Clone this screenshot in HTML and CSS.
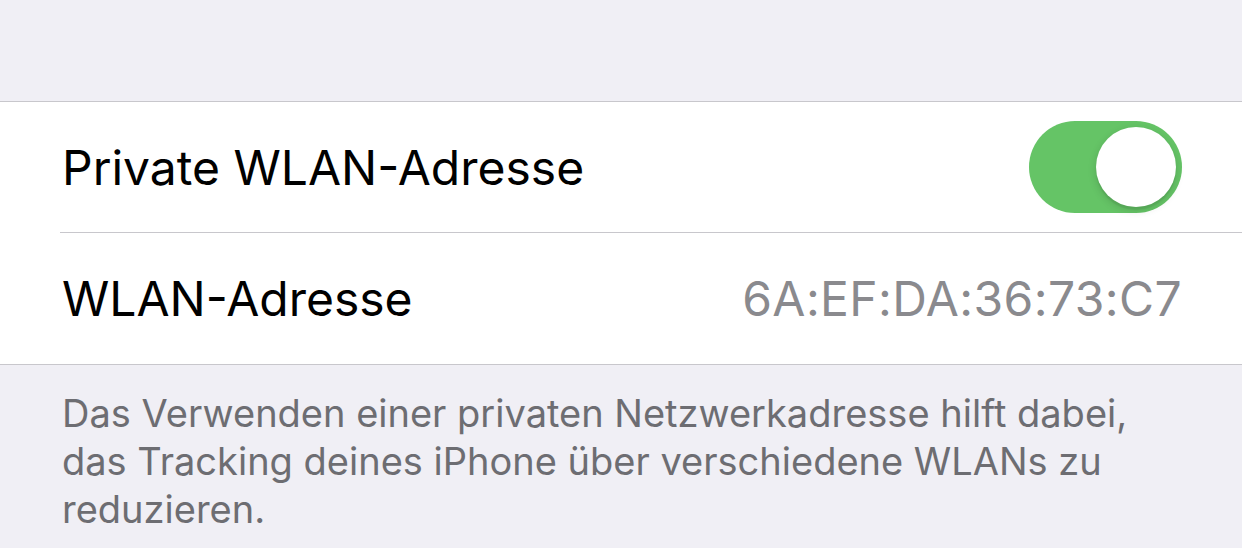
FILE: index.html
```html
<!DOCTYPE html>
<html lang="de">
<head>
    <meta charset="UTF-8">
    <meta name="viewport" content="width=device-width, initial-scale=1.0">
    <title>WLAN-Adresse</title>
    <link rel="stylesheet" href="styles.css">
</head>
<body>
    <div class="top-space"></div>

    <div class="group">
        <div class="row row-first">
            <span class="label">Private WLAN-Adresse</span>
            <div class="switch switch-on">
                <div class="knob"></div>
            </div>
        </div>
        <div class="row row-last">
            <span class="label">WLAN-Adresse</span>
            <span class="value">6A:EF:DA:36:73:C7</span>
        </div>
    </div>

    <p class="footer">Das Verwenden einer privaten Netzwerkadresse hilft dabei, das Tracking deines iPhone über verschiedene WLANs zu reduzieren.</p>
</body>
</html>
```

FILE: styles.css
```css
body {
    margin: 0;
    background: #f0eff5;
    font-family: Inter, "Noto Sans", sans-serif;
    overflow: hidden;
}
.top-space {
    height: 101px;
}
.group {
    background: white;
    border-top: 1px solid #c8c7cc;
    border-bottom: 1px solid #c8c7cc;
}
.row {
    margin-left: 60px;
    padding-right: 60px;
    height: 130px;
    display: flex;
    align-items: center;
    justify-content: space-between;
}
.row-first {
    border-bottom: 1px solid #c8c7cc;
}
.row-last {
    height: 131px;
}
.label {
    padding-left: 2px;
    font-size: 48px;
    color: #000;
}
.value {
    font-size: 48px;
    letter-spacing: 0.4px;
    color: #8a8a8e;
}
.switch {
    width: 153px;
    height: 92px;
    border-radius: 46px;
    background: #e9e9eb;
    position: relative;
}
.switch-on {
    background: #65c466;
}
.knob {
    position: absolute;
    top: 6px;
    right: 6px;
    width: 80px;
    height: 80px;
    border-radius: 50%;
    background: white;
    box-shadow: 0 3px 8px rgba(0,0,0,0.15), 0 3px 1px rgba(0,0,0,0.06);
}
.footer {
    margin: 0;
    padding: 24px 60px 0 62px;
    font-size: 38px;
    line-height: 48px;
    color: #6d6d72;
}
```
